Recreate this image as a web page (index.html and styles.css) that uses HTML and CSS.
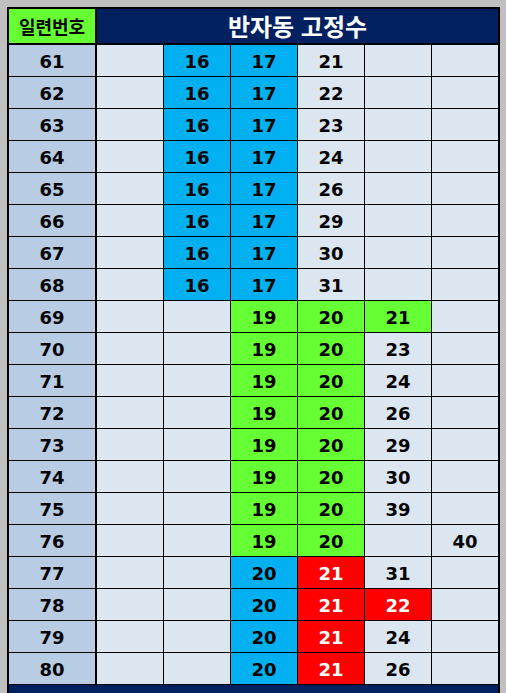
FILE: index.html
```html
<!DOCTYPE html>
<html lang="ko">
<head>
<meta charset="utf-8">
<title>반자동 고정수</title>
<link rel="stylesheet" href="styles.css">
</head>
<body>
<div class="sheet">
  <div class="hd hd-serial">일련번호</div>
  <div class="hd hd-title">반자동 고정수</div>

  <div class="c sn">61</div><div class="c"></div><div class="c b">16</div><div class="c b">17</div><div class="c">21</div><div class="c"></div><div class="c"></div>
  <div class="c sn">62</div><div class="c"></div><div class="c b">16</div><div class="c b">17</div><div class="c">22</div><div class="c"></div><div class="c"></div>
  <div class="c sn">63</div><div class="c"></div><div class="c b">16</div><div class="c b">17</div><div class="c">23</div><div class="c"></div><div class="c"></div>
  <div class="c sn">64</div><div class="c"></div><div class="c b">16</div><div class="c b">17</div><div class="c">24</div><div class="c"></div><div class="c"></div>
  <div class="c sn">65</div><div class="c"></div><div class="c b">16</div><div class="c b">17</div><div class="c">26</div><div class="c"></div><div class="c"></div>
  <div class="c sn">66</div><div class="c"></div><div class="c b">16</div><div class="c b">17</div><div class="c">29</div><div class="c"></div><div class="c"></div>
  <div class="c sn">67</div><div class="c"></div><div class="c b">16</div><div class="c b">17</div><div class="c">30</div><div class="c"></div><div class="c"></div>
  <div class="c sn">68</div><div class="c"></div><div class="c b">16</div><div class="c b">17</div><div class="c">31</div><div class="c"></div><div class="c"></div>

  <div class="c sn">69</div><div class="c"></div><div class="c"></div><div class="c g">19</div><div class="c g">20</div><div class="c g">21</div><div class="c"></div>
  <div class="c sn">70</div><div class="c"></div><div class="c"></div><div class="c g">19</div><div class="c g">20</div><div class="c">23</div><div class="c"></div>
  <div class="c sn">71</div><div class="c"></div><div class="c"></div><div class="c g">19</div><div class="c g">20</div><div class="c">24</div><div class="c"></div>
  <div class="c sn">72</div><div class="c"></div><div class="c"></div><div class="c g">19</div><div class="c g">20</div><div class="c">26</div><div class="c"></div>
  <div class="c sn">73</div><div class="c"></div><div class="c"></div><div class="c g">19</div><div class="c g">20</div><div class="c">29</div><div class="c"></div>
  <div class="c sn">74</div><div class="c"></div><div class="c"></div><div class="c g">19</div><div class="c g">20</div><div class="c">30</div><div class="c"></div>
  <div class="c sn">75</div><div class="c"></div><div class="c"></div><div class="c g">19</div><div class="c g">20</div><div class="c">39</div><div class="c"></div>
  <div class="c sn">76</div><div class="c"></div><div class="c"></div><div class="c g">19</div><div class="c g">20</div><div class="c"></div><div class="c">40</div>

  <div class="c sn">77</div><div class="c"></div><div class="c"></div><div class="c b">20</div><div class="c r">21</div><div class="c">31</div><div class="c"></div>
  <div class="c sn">78</div><div class="c"></div><div class="c"></div><div class="c b">20</div><div class="c r">21</div><div class="c r">22</div><div class="c"></div>
  <div class="c sn">79</div><div class="c"></div><div class="c"></div><div class="c b">20</div><div class="c r">21</div><div class="c">24</div><div class="c"></div>
  <div class="c sn">80</div><div class="c"></div><div class="c"></div><div class="c b">20</div><div class="c r">21</div><div class="c">26</div><div class="c"></div>

  <div class="foot"></div>
</div>
</body>
</html>
```

FILE: styles.css
```css
html, body {
  margin: 0;
  padding: 0;
  overflow: hidden;
}
body {
  background: #c0c0c0;
  padding: 7px 0 0 7px;
  height: 693px;
  box-sizing: border-box;
}
.sheet {
  width: 493px;
  box-sizing: border-box;
  border: 2px solid #000;
  border-bottom: 0;
  background: #000;
  display: grid;
  grid-template-columns: 87px repeat(6, 66px);
  grid-template-rows: 35px repeat(20, 31px) 8px;
  gap: 1px;
}
.hd {
  display: flex;
  align-items: center;
  justify-content: center;
  font-family: "Noto Sans CJK KR", sans-serif;
  font-weight: 700;
  border-bottom: 1px solid #000;
}
.hd-serial {
  background: #66ff33;
  color: #000;
  font-size: 18px;
  border-right: 1px solid #000;
}
.hd-title {
  grid-column: 2 / -1;
  background: #002060;
  color: #fff;
  font-size: 24px;
  padding-bottom: 1px;
}
.c {
  display: flex;
  align-items: center;
  justify-content: center;
  padding-top: 2px;
  box-sizing: border-box;
  background: #dce6f1;
  color: #000;
  font-family: "DejaVu Sans", sans-serif;
  font-weight: 700;
  font-size: 18px;
}
.sn {
  background: #b8cce4;
  border-right: 1px solid #000;
}
.b { background: #00b0f0; }
.g { background: #66ff33; }
.r { background: #ff0000; color: #fff; }
.foot {
  grid-column: 1 / -1;
  background: #002060;
}
```
